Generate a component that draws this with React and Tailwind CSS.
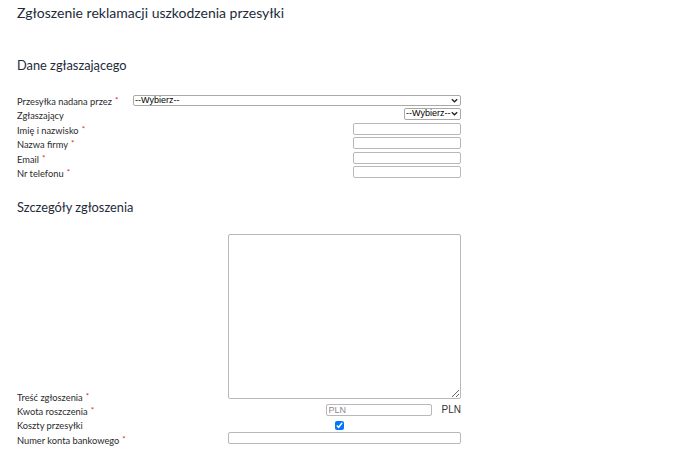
import { useState } from 'react';

const lato = "font-['Lato','Noto_Sans',sans-serif]";
const arial = "font-['Liberation_Sans',Arial,sans-serif]";

function Req() {
  return <span className="ml-[3px] align-top text-[8px] leading-[10px] text-[#e0261c]">*</span>;
}

function Label({ children, required, className = '' }) {
  return (
    <div className={`whitespace-nowrap text-[9.3px] leading-[14px] text-[#2b2b2b] ${className}`}>
      {children}
      {required && <Req />}
    </div>
  );
}

function Chevron() {
  return (
    <svg width="7" height="5" viewBox="0 0 7 5" className="shrink-0">
      <path d="M0.8 1.2 L3.5 3.8 L6.2 1.2" fill="none" stroke="#222" strokeWidth="1.3" />
    </svg>
  );
}

// dropdown box drawn as a plain element so its size stays fixed
function Select({ className = '' }) {
  return (
    <div
      className={`box-border flex items-center justify-between overflow-hidden whitespace-nowrap rounded-[2px] border border-[#a9a9a9] bg-white pl-[1px] pr-[2px] text-[9px] leading-[9px] text-black ${arial} ${className}`}
    >
      <span>--Wybierz--</span>
      <Chevron />
    </div>
  );
}

function TextInput({ className = '', placeholder }) {
  return (
    <input
      type="text"
      placeholder={placeholder}
      className={`box-border h-[12px] rounded-[2px] border border-[#b8b8b8] bg-white px-[2px] text-[9px] leading-[9px] text-black outline-none placeholder:text-[#8a8a8a] ${arial} ${className}`}
    />
  );
}

export default function App() {
  const [shipping, setShipping] = useState(true);

  return (
    <div className={`min-h-screen bg-white pl-[17px] pt-[4px] ${lato}`}>
      <h1 className="text-[14px] leading-[17px] text-[#1d2b3a]">Zgłoszenie reklamacji uszkodzenia przesyłki</h1>

      {/* reporter data */}
      <h2 className="mt-[36px] text-[12.8px] leading-[17px] text-[#1d2b3a]">Dane zgłaszającego</h2>
      <div className="mt-[19.5px] w-[444px]">
        <div className="flex h-[14.6px] items-start">
          <Label required className="w-[116px] pt-[1px]">Przesyłka nadana przez</Label>
          <Select className="mt-[1px] h-[11px] w-[328px]" />
        </div>
        <div className="flex h-[14.6px] items-start">
          <Label className="w-[116px] pt-[1px]">Zgłaszający</Label>
          <div className="flex flex-1 justify-end">
            <Select className="h-[11.5px] w-[57px]" />
          </div>
        </div>
        {['Imię i nazwisko', 'Nazwa firmy', 'Email', 'Nr telefonu'].map((f) => (
          <div key={f} className="flex h-[14.6px] items-start">
            <Label required className="w-[116px] pt-[1px]">{f}</Label>
            <div className="flex flex-1 justify-end">
              <TextInput className="w-[108px]" />
            </div>
          </div>
        ))}
      </div>

      {/* claim details */}
      <h2 className="mt-[17.5px] text-[12.8px] leading-[17px] text-[#1d2b3a]">Szczegóły zgłoszenia</h2>
      <div className="mt-[18px] w-[444px]">
        <div className="flex items-end">
          <Label required className="-mb-[3px] w-[211px]">Treść zgłoszenia</Label>
          <textarea className="mb-[3px] h-[165px] w-[233px] resize rounded-[2px] border border-[#b8b8b8] bg-white outline-none" />
        </div>
        <div className="flex h-[14.5px] items-start">
          <Label required className="w-[211px] pt-[3px]">Kwota roszczenia</Label>
          <div className="mt-[2px] flex flex-1 items-center justify-end">
            <TextInput placeholder="PLN" className="w-[106px]" />
            <span className={`ml-[10px] text-[10px] leading-[12px] text-[#333] ${arial}`}>PLN</span>
          </div>
        </div>
        <div className="flex h-[14.5px] items-start">
          <Label className="w-[211px] pt-[2.5px]">Koszty przesyłki</Label>
          <input
            type="checkbox"
            checked={shipping}
            onChange={(e) => setShipping(e.target.checked)}
            className="m-0 ml-[107px] mt-[4.5px] h-[9px] w-[9px] accent-[#0075ff]"
          />
        </div>
        <div className="flex h-[14.5px] items-start">
          <Label required className="w-[211px] pt-[3px]">Numer konta bankowego</Label>
          <TextInput className="mt-[1px] w-[233px]" />
        </div>
      </div>
    </div>
  );
}
